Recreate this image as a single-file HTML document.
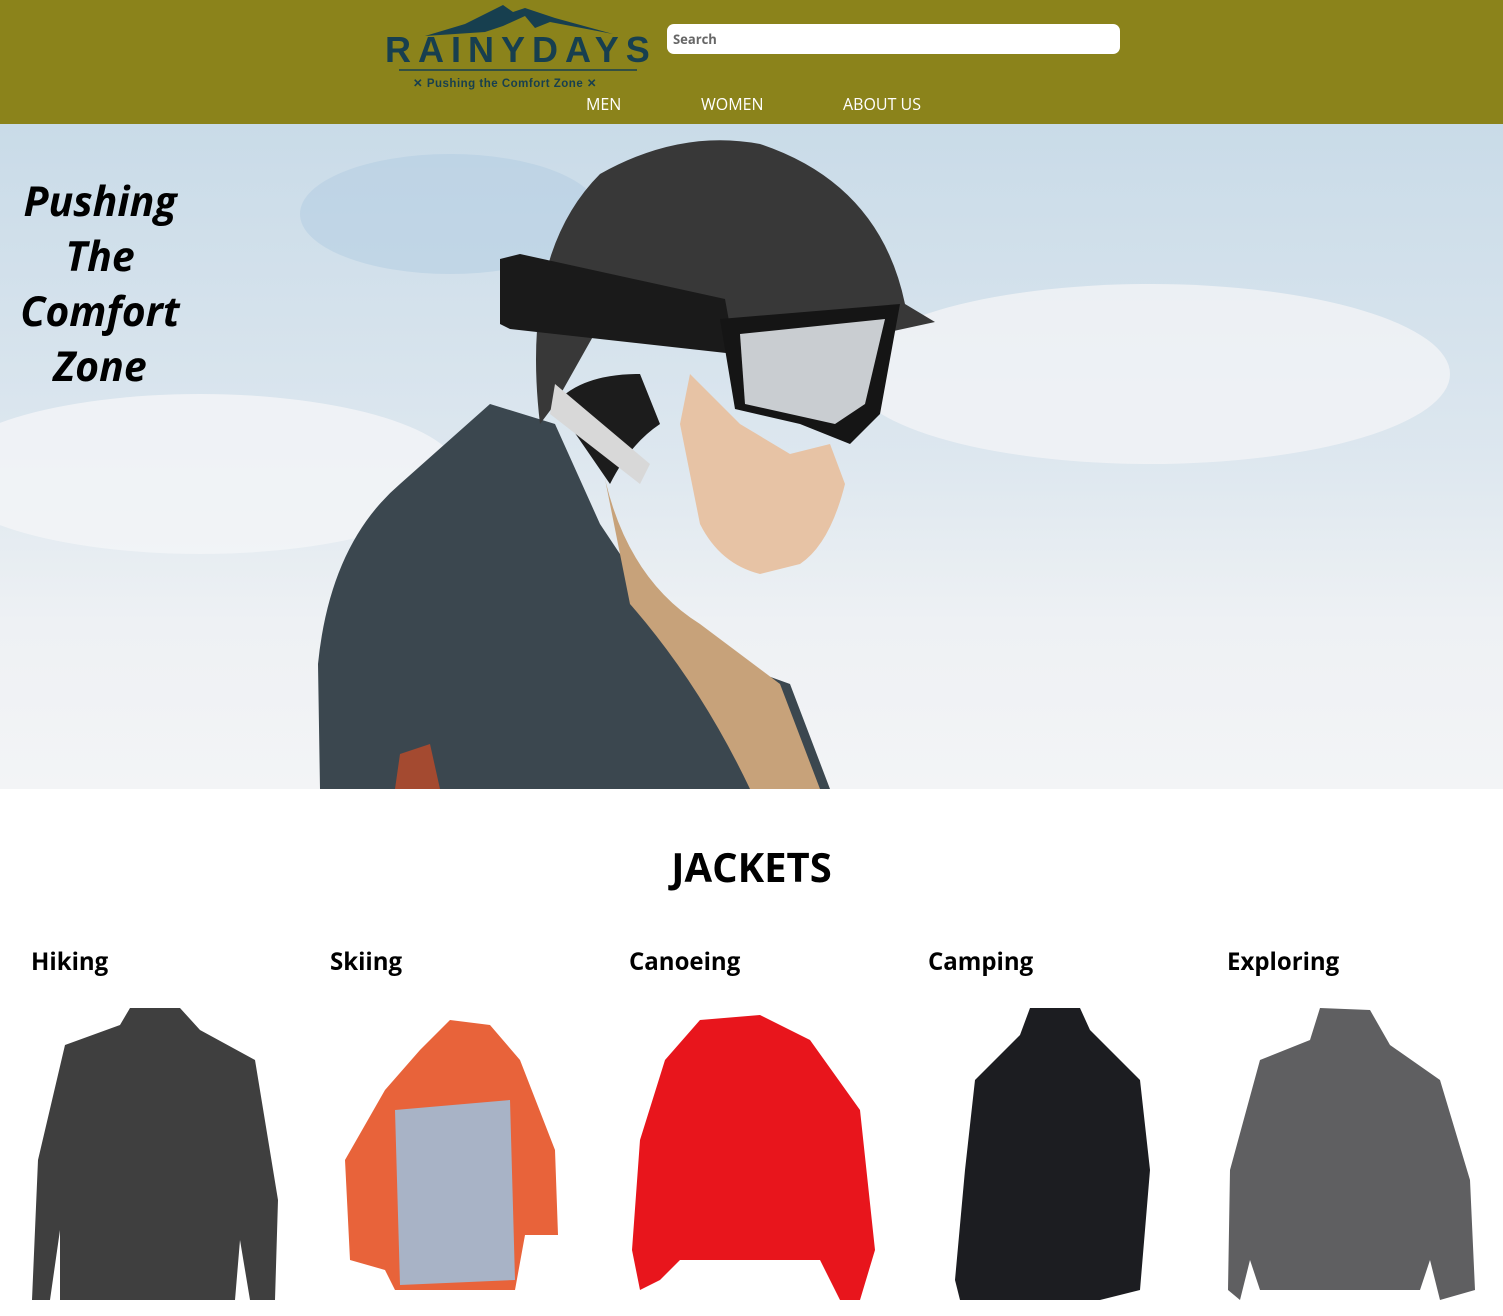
<!DOCTYPE html>
<html><head><meta charset="utf-8"><style>
*{margin:0;padding:0;box-sizing:border-box}
body{width:1503px;height:1316px;overflow:hidden;background:#fff;font-family:"Open Sans","Liberation Sans",sans-serif}
header{position:absolute;left:0;top:0;width:1503px;height:124px;background:#8b831b}
.logo{position:absolute;left:385px;top:0}
.search{position:absolute;left:667px;top:24px;width:453px;height:30px;background:#fff;border-radius:7px;font-size:13px;color:#666;padding:6px 6px;font-weight:bold}
nav a{position:absolute;top:93px;color:#fff;font-size:16px;text-decoration:none}
.hero{position:absolute;left:0;top:124px;width:1503px;height:665px;overflow:hidden}
.tag{position:absolute;left:0;width:200px;text-align:center;font-style:italic;font-weight:bold;font-size:41px;line-height:55px;color:#000}
h1{position:absolute;left:0;width:1503px;top:839px;text-align:center;font-size:40px;font-weight:bold}
.cat{position:absolute;top:945px;font-size:24px;font-weight:bold}
</style></head><body>
<header>
<svg class="logo" width="270" height="95" viewBox="0 0 270 95">
<path d="M40 36 L80 24 L100 14 L118 5 L128 12 L140 8 L170 18 L228 34 L165 22 L150 28 L140 16 L118 26 L100 32 Z" fill="#173f4f"/>
<text x="0" y="62" font-family="Liberation Sans" font-weight="bold" font-size="36" letter-spacing="7" fill="#173f4f">RAINYDAYS</text>
<line x1="14" y1="70" x2="252" y2="70" stroke="#173f4f" stroke-width="1.5"/>
<text x="28" y="87" font-family="Liberation Sans" font-weight="bold" font-size="11.5" letter-spacing=".5" fill="#173f4f">✕ Pushing the Comfort Zone ✕</text>
</svg>
<div class="search">Search</div>
<nav><a style="left:586px">MEN</a><a style="left:701px">WOMEN</a><a style="left:843px">ABOUT US</a></nav>
</header>
<div class="hero">
<svg width="1503" height="665" viewBox="0 0 1503 665">
<defs><linearGradient id="s" x1="0" y1="0" x2="0" y2="1"><stop offset="0" stop-color="#c9dbe8"/><stop offset=".5" stop-color="#dde7ef"/><stop offset=".75" stop-color="#eef1f4"/><stop offset="1" stop-color="#f3f4f6"/></linearGradient></defs>
<rect width="1503" height="665" fill="url(#s)"/>
<ellipse cx="1150" cy="250" rx="300" ry="90" fill="#f2f4f6" opacity=".8"/>
<ellipse cx="200" cy="350" rx="260" ry="80" fill="#f4f5f7" opacity=".8"/>
<ellipse cx="450" cy="90" rx="150" ry="60" fill="#b6cfe2" opacity=".6"/>
<path d="M320 665 L318 540 Q330 420 400 360 L490 280 L555 300 L600 400 L680 520 L790 560 L830 665 Z" fill="#3b474f"/>
<path d="M395 665 L400 630 L430 620 L440 665 Z" fill="#a44a30"/>
<path d="M600 330 Q620 450 700 500 L780 560 L820 665 L750 665 Q700 560 630 480 Z" fill="#c7a27a"/>
<path d="M690 250 L740 300 L790 330 L830 320 L845 360 Q830 420 800 440 L760 450 Q720 440 700 400 L680 300 Z" fill="#e7c3a5"/>
<path d="M555 280 Q580 250 640 250 L660 300 Q630 320 610 360 Z" fill="#1c1c1c"/>
<path d="M540 300 Q520 130 600 50 Q680 5 760 20 Q880 60 905 180 L935 198 L880 210 L700 210 L600 200 L555 280 Z" fill="#383838"/>
<path d="M500 135 L520 130 L725 175 L735 230 L510 205 L500 200 Z" fill="#1a1a1a"/>
<path d="M720 195 L900 180 L880 290 L850 320 L800 300 L735 285 Z" fill="#151515"/>
<path d="M740 210 L885 195 L865 280 L835 300 L745 280 Z" fill="#c9cdd1"/>
<path d="M555 260 L650 340 L640 360 L550 290 Z" fill="#d8d8d8"/>
</svg>
<div class="tag" style="top:50px">Pushing<br>The<br>Comfort<br>Zone</div>
</div>
<h1>JACKETS</h1>
<div class="cat" style="left:31px">Hiking</div>
<div class="cat" style="left:330px">Skiing</div>
<div class="cat" style="left:629px">Canoeing</div>
<div class="cat" style="left:928px">Camping</div>
<div class="cat" style="left:1227px">Exploring</div>
<svg style="position:absolute;left:0;top:1000px" width="1503" height="316">
<path d="M130 8 L180 8 L200 30 L255 60 L278 200 L275 300 L250 300 L240 240 L235 300 L60 300 L60 230 L50 300 L32 300 L38 160 L65 45 L120 25 Z" fill="#3f3f3f"/>
<path d="M450 20 L490 25 L520 60 L555 150 L558 235 L525 235 L515 290 L395 290 L385 270 L350 260 L345 160 L385 90 L420 50 Z" fill="#e8633a"/>
<path d="M395 110 L510 100 L515 280 L400 285 Z" fill="#a8b3c6"/>
<path d="M700 20 L760 15 L810 40 L860 110 L875 250 L860 300 L840 300 L820 260 L680 260 L660 280 L640 290 L632 250 L640 140 L665 60 Z" fill="#e8151c"/>
<path d="M1030 8 L1080 8 L1090 30 L1140 80 L1150 170 L1140 290 L1100 300 L960 300 L955 280 L965 170 L975 80 L1020 35 Z" fill="#1c1d21"/>
<path d="M1320 8 L1370 10 L1390 45 L1440 80 L1470 180 L1475 290 L1440 300 L1430 260 L1420 290 L1260 290 L1250 260 L1240 300 L1228 290 L1230 170 L1260 60 L1310 40 Z" fill="#5f5f61"/>
</svg>
</body></html>
